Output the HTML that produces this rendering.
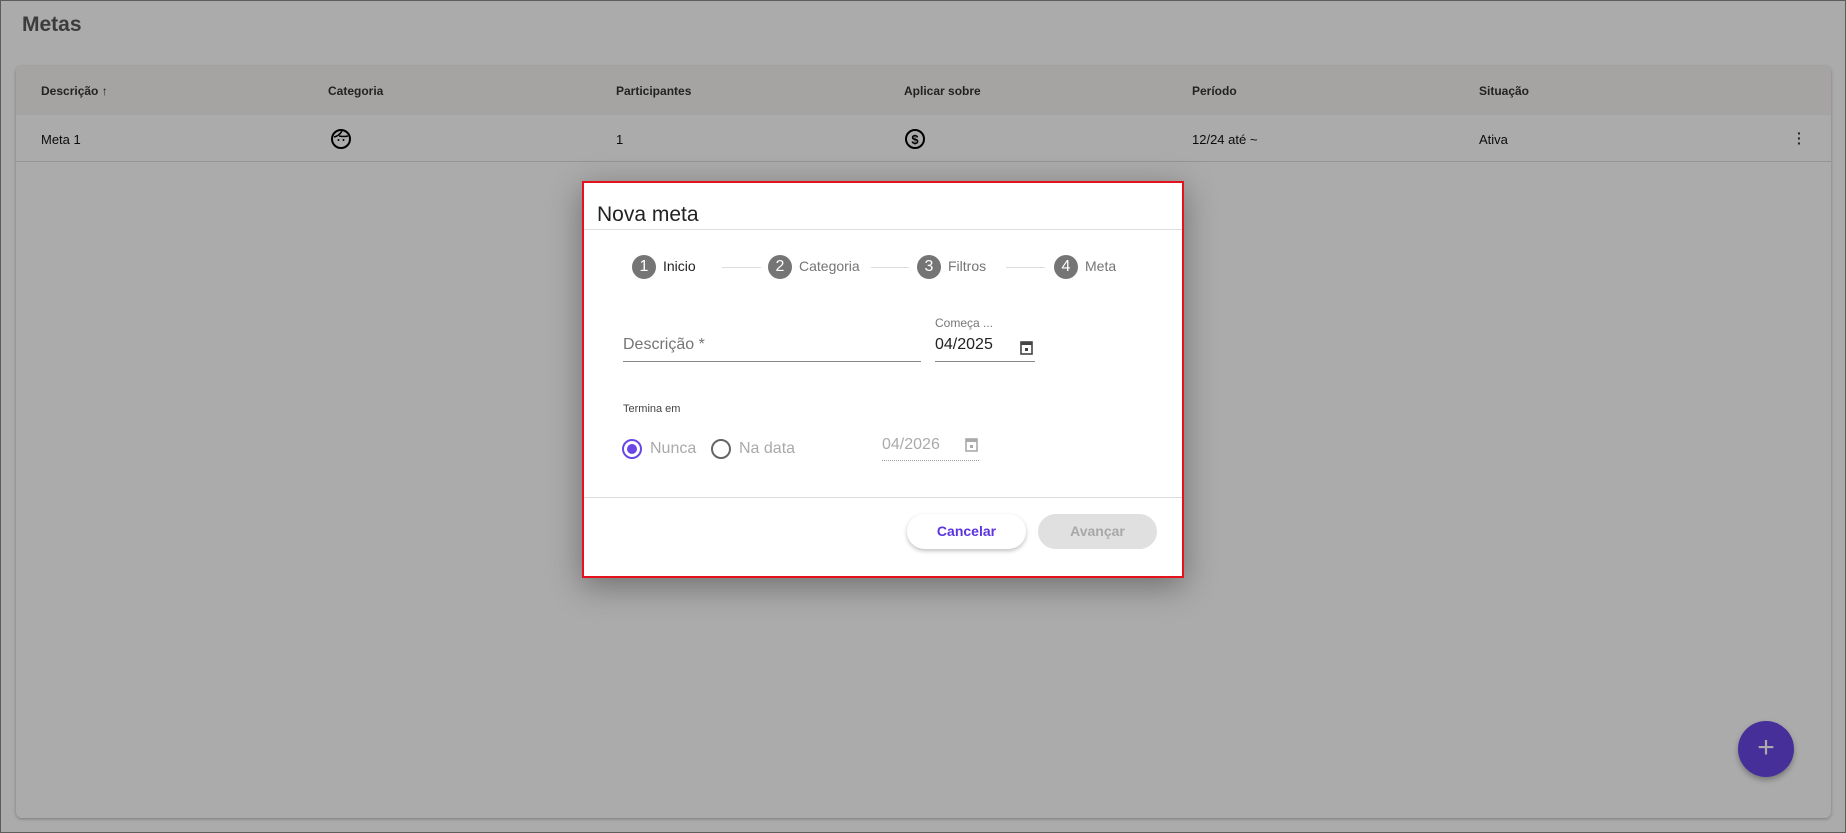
<!DOCTYPE html>
<html><head><meta charset="utf-8"><style>
*{box-sizing:border-box;margin:0;padding:0}
body{width:1846px;height:833px;overflow:hidden;font-family:"Liberation Sans",sans-serif;background:#fff;position:relative}
.page{position:absolute;inset:0;border:1px solid #8a8a8a;background:#fff}
.abs{position:absolute}
.ov{position:absolute;inset:0;background:rgba(0,0,0,0.33)}
.hd{font-size:12px;font-weight:bold;color:#333;top:83px}
.cell{font-size:13px;color:#111;top:131px}
.dlg{position:absolute;left:582px;top:181px;width:602px;height:397px;background:#fff;border:2px solid #e3121c;box-shadow:0 8px 30px rgba(0,0,0,.35)}
.circ{position:absolute;width:24px;height:24px;border-radius:50%;background:#757575;color:#fff;font-size:16px;text-align:center;line-height:24px;top:72px}
.sl{position:absolute;top:75px;font-size:14px;color:#757575}
.ln{position:absolute;top:84px;height:1px;background:#ddd}
</style></head><body>
<div class="page">
 <div class="abs" style="left:21px;top:12px;font-size:21px;font-weight:bold;color:#5a5a5a">Metas</div>
 <div class="abs" style="left:15px;top:65px;width:1815px;height:752px;background:#fff;border-radius:6px;box-shadow:0 1px 3px rgba(0,0,0,.3)"></div>
 <div class="abs" style="left:15px;top:65px;width:1815px;height:49px;background:#f7f5f3;border-radius:6px 6px 0 0"></div>
 <div class="abs" style="left:15px;top:160px;width:1815px;height:1px;background:#ddd"></div>
 <div class="abs hd" style="left:40px">Descrição ↑</div>
 <div class="abs hd" style="left:327px">Categoria</div>
 <div class="abs hd" style="left:615px">Participantes</div>
 <div class="abs hd" style="left:903px">Aplicar sobre</div>
 <div class="abs hd" style="left:1191px">Período</div>
 <div class="abs hd" style="left:1478px">Situação</div>
 <div class="abs cell" style="left:40px">Meta 1</div>
 <svg class="abs" style="left:329px;top:127px" width="22" height="22" viewBox="0 0 22 22"><circle cx="11" cy="11" r="9" fill="none" stroke="#000" stroke-width="2"/><path d="M4 9 Q9 8 12 3 M9 8 Q14 9 18 8" fill="none" stroke="#000" stroke-width="1.6"/><circle cx="8.5" cy="12" r="1" fill="#000"/><circle cx="13.5" cy="12" r="1" fill="#000"/></svg>
 <div class="abs cell" style="left:615px">1</div>
 <svg class="abs" style="left:903px;top:127px" width="22" height="22" viewBox="0 0 22 22"><circle cx="11" cy="11" r="9" fill="none" stroke="#000" stroke-width="2"/><text x="11" y="16" font-size="13" font-weight="bold" text-anchor="middle" font-family="Liberation Sans">$</text></svg>
 <div class="abs cell" style="left:1191px">12/24 até ~</div>
 <div class="abs cell" style="left:1478px">Ativa</div>
 <div class="abs" style="left:1796px;top:130px;width:4px;font-size:14px;line-height:5px;color:#333;font-weight:bold">·<br>·<br>·</div>
 <div class="abs" style="left:1737px;top:720px;width:56px;height:56px;border-radius:50%;background:#6a46e6;color:#fff;font-size:30px;text-align:center;line-height:54px;box-shadow:0 3px 6px rgba(0,0,0,.3)">+</div>
</div>
<div class="ov"></div>
<div class="dlg">
 <div class="abs" style="left:13px;top:20px;font-size:21px;color:#222">Nova meta</div>
 <div class="abs" style="left:0;top:46px;width:598px;height:1px;background:#ddd"></div>
 <div class="circ" style="left:48px">1</div><div class="sl" style="left:79px;color:#222">Inicio</div>
 <div class="ln" style="left:138px;width:39px"></div>
 <div class="circ" style="left:184px">2</div><div class="sl" style="left:215px">Categoria</div>
 <div class="ln" style="left:287px;width:38px"></div>
 <div class="circ" style="left:333px">3</div><div class="sl" style="left:364px">Filtros</div>
 <div class="ln" style="left:422px;width:39px"></div>
 <div class="circ" style="left:470px">4</div><div class="sl" style="left:501px">Meta</div>
 <div class="abs" style="left:39px;top:153px;font-size:16px;color:#757575">Descrição *</div>
 <div class="abs" style="left:39px;top:178px;width:298px;height:1px;background:#888"></div>
 <div class="abs" style="left:351px;top:133px;font-size:12px;color:#777">Começa ...</div>
 <div class="abs" style="left:351px;top:153px;font-size:16px;color:#222">04/2025</div>
 <svg class="abs" style="left:436px;top:157px" width="13" height="15" viewBox="0 0 13 15"><rect x="1" y="2" width="11" height="12" fill="none" stroke="#444" stroke-width="1.6"/><rect x="1" y="2" width="11" height="3" fill="#444"/><rect x="5" y="8" width="3" height="3" fill="#444"/></svg>
 <div class="abs" style="left:351px;top:178px;width:100px;height:1px;background:#888"></div>
 <div class="abs" style="left:39px;top:220px;font-size:11px;color:#444">Termina em</div>
 <div class="abs" style="left:38px;top:256px;width:20px;height:20px;border-radius:50%;border:2px solid #6a46e6"><div style="margin:3px;width:10px;height:10px;border-radius:50%;background:#6a46e6"></div></div>
 <div class="abs" style="left:66px;top:257px;font-size:16px;color:#aaa">Nunca</div>
 <div class="abs" style="left:127px;top:256px;width:20px;height:20px;border-radius:50%;border:2px solid #666"></div>
 <div class="abs" style="left:155px;top:257px;font-size:16px;color:#aaa">Na data</div>
 <div class="abs" style="left:298px;top:253px;font-size:16px;color:#aaa">04/2026</div>
 <svg class="abs" style="left:381px;top:254px" width="13" height="15" viewBox="0 0 13 15"><rect x="1" y="2" width="11" height="12" fill="none" stroke="#aaa" stroke-width="1.6"/><rect x="1" y="2" width="11" height="3" fill="#aaa"/><rect x="5" y="8" width="3" height="3" fill="#aaa"/></svg>
 <div class="abs" style="left:298px;top:277px;width:97px;border-top:1px dotted #999"></div>
 <div class="abs" style="left:0;top:314px;width:598px;height:1px;background:#ddd"></div>
 <div class="abs" style="left:323px;top:331px;width:119px;height:35px;border-radius:18px;background:#fff;box-shadow:0 2px 4px rgba(0,0,0,.25);color:#5b34e0;font-weight:bold;font-size:14px;text-align:center;line-height:35px">Cancelar</div>
 <div class="abs" style="left:454px;top:331px;width:119px;height:35px;border-radius:18px;background:#e0e0e0;color:#a8a8a8;font-weight:bold;font-size:14px;text-align:center;line-height:35px">Avançar</div>
</div>
</body></html>
